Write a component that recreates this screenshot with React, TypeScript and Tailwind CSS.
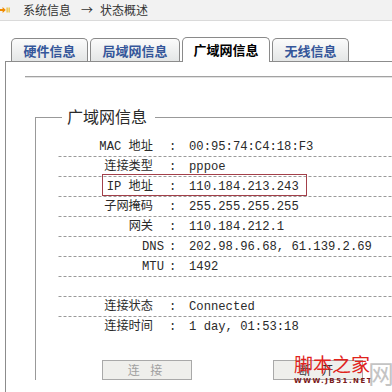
import React from "react";

type Row = { label: string; value: string; cjk?: boolean; hl?: boolean; blank?: boolean; last?: boolean };

const rows: Row[] = [
  { label: "MAC 地址", value: "00:95:74:C4:18:F3", cjk: true },
  { label: "连接类型", value: "pppoe", cjk: true },
  { label: "IP 地址", value: "110.184.213.243", cjk: true, hl: true },
  { label: "子网掩码", value: "255.255.255.255", cjk: true },
  { label: "网关", value: "110.184.212.1", cjk: true },
  { label: "DNS", value: "202.98.96.68, 61.139.2.69" },
  { label: "MTU", value: "1492" },
  { label: "", value: "", blank: true },
  { label: "连接状态", value: "Connected", cjk: true },
  { label: "连接时间", value: "1 day, 01:53:18", cjk: true, last: true },
];

const tabs = [
  { name: "硬件信息", w: "w-[77px]", active: false },
  { name: "局域网信息", w: "w-[90px]", active: false },
  { name: "广域网信息", w: "w-[88px]", active: true },
  { name: "无线信息", w: "w-[77px]", active: false },
];

export default function App() {
  return (
    <div className="relative w-[392px] h-[392px] overflow-hidden bg-white text-[#2a2a2a] font-['Liberation_Mono','Noto_Sans_CJK_SC',monospace]">
      {/* header */}
      <div className="flex h-[21px] items-center border-b border-[#dadada] bg-[#f2f2f2]">
        <svg width="10" height="10" viewBox="0 0 10 10" className="shrink-0">
          <path d="M0 4h2.6V2L5.8 5 2.6 8V6H0z" fill="#f08a00" />
          <rect x="6.6" y="2.5" width="1" height="5" fill="#e9b000" />
          <rect x="8.6" y="2.5" width="1" height="5" fill="#e9b000" />
        </svg>
        <div className="ml-[13px] flex items-center font-['Noto_Sans_CJK_SC',sans-serif] text-[12px] leading-[14px] text-[#333]">
          <span>系统信息</span>
          <span className="ml-[10px] mr-[7px]">→</span>
          <span>状态概述</span>
        </div>
      </div>

      {/* tabs */}
      <div className="mt-[16px] flex items-end gap-[2px] pl-[11px]">
        {tabs.map((t) =>
          t.active ? (
            <div
              key={t.name}
              className={`relative z-10 -mb-px flex h-[25px] ${t.w} items-center justify-center rounded-t-[5px] border border-b-0 border-[#8a8a8a] bg-white font-['Noto_Sans_CJK_SC',sans-serif] text-[13px] font-bold text-black`}
            >
              {t.name}
            </div>
          ) : (
            <div
              key={t.name}
              className={`flex h-[23px] ${t.w} items-center justify-center rounded-t-[5px] border border-b-0 border-[#8a8a8a] bg-linear-to-b from-[#fbfbfb] to-[#e4e6e6] pt-[1px] font-['Noto_Sans_CJK_SC',sans-serif] text-[13px] font-bold text-[#34569a]`}
            >
              {t.name}
            </div>
          )
        )}
      </div>

      {/* panel */}
      <div className="ml-[5px] h-[400px] border-l border-t border-[#8c8c8c]">
        <div className="ml-[19px] mt-[14px] h-0 border-b border-t border-b-[#e2e2e2] border-t-[#a2a2a2]" />

        <div className="relative ml-[29px] mt-[39px] w-[420px] border-l border-t border-[#999] pl-[21px] pt-[19px]">
          <div className="absolute left-[26px] top-[-11px] h-[18px] bg-white pl-[5px] pr-[8px] font-['Noto_Sans_CJK_SC',sans-serif] text-[16px] leading-[18px] text-[#2a2a2a]">
            广域网信息
          </div>

          {rows.map((r, i) => (
            <div
              key={i}
              className={`relative flex h-[20px] items-center text-[12.2px] leading-[14px] ${
                r.last
                  ? ""
                  : "bg-[linear-gradient(to_right,#9a9a9a_3px,transparent_3px)] bg-[length:5px_1px] bg-bottom bg-repeat-x"
              }`}
            >
              {!r.blank && (
                <>
                  <span className={`w-[107px] shrink-0 text-right ${r.cjk ? "pr-[11px]" : ""}`}>{r.label}</span>
                  <span className="w-[25px] shrink-0 pl-[5px]">:</span>
                  <span className="whitespace-pre">{r.value}</span>
                </>
              )}
              {r.hl && (
                <div className="absolute left-[45px] top-[-3px] h-[22px] w-[205px] border border-[#a3404a]" />
              )}
            </div>
          ))}

          <div className="mt-[23px] flex pl-[45px]">
            <div className="flex h-[20px] w-[90px] items-center justify-center border border-[#a9a9a9] bg-[#efefec] font-['Noto_Sans_CJK_SC',sans-serif] text-[12px] tracking-[4px] text-[#a0a0a0]">
              连 接
            </div>
            <div className="ml-[81px] flex h-[20px] w-[90px] items-center justify-center border border-[#a9a9a9] bg-[#efefec] font-['Noto_Sans_CJK_SC',sans-serif] text-[12px] tracking-[4px] text-[#333]">
              断 开
            </div>
          </div>
        </div>
      </div>

      {/* watermark overlay */}
      <div className="pointer-events-none absolute left-[294px] top-[352px]">
        <div className="font-['Noto_Sans_CJK_SC',serif] text-[19px] leading-[24px] tracking-[0px] text-[#e0231c]">脚本之家</div>
        <div className="mt-[1px] font-['DejaVu_Sans',sans-serif] text-[7px] font-bold leading-[8px] tracking-[1.5px] text-[#7a1a1a]">
          WWW.JB51.NET
        </div>
      </div>
      <div className="pointer-events-none absolute left-[368px] top-[358px] font-['Noto_Sans_CJK_SC',sans-serif] text-[26px] leading-[30px] text-[#c4c4c4]">
        网
      </div>
    </div>
  );
}
